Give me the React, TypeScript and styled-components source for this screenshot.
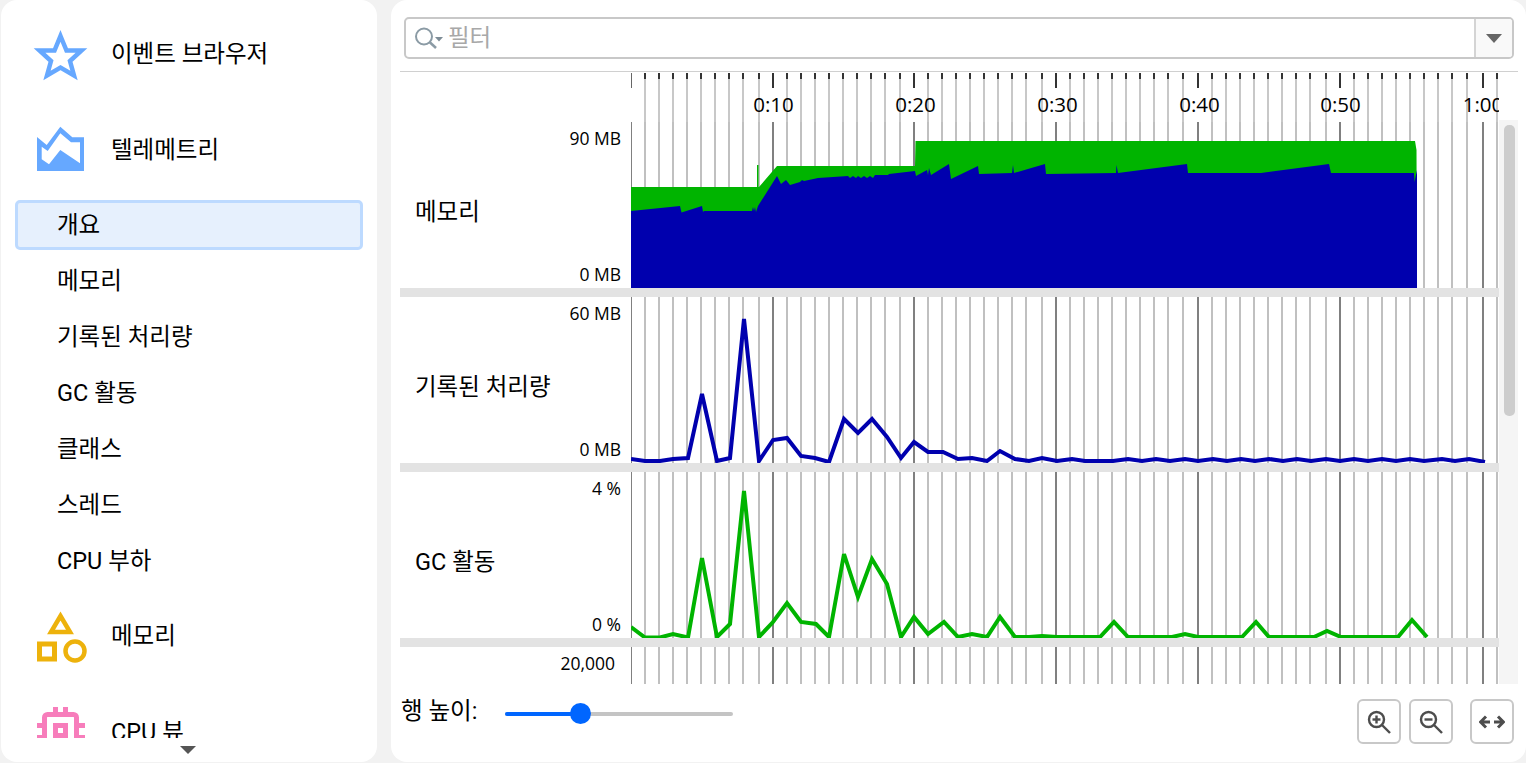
import styled, { createGlobalStyle } from 'styled-components';

const LABEL_FONT = '"Roboto", "Noto Sans CJK KR", sans-serif';

const GlobalStyle = createGlobalStyle`
    html, body {
        margin: 0;
        padding: 0;
        background: #f2f2f2;
        overflow: hidden;
    }
    body {
        font-family: "Open Sans", "Noto Sans CJK KR", sans-serif;
        color: #000;
    }
`;

const Page = styled.div`
    display: flex;
    gap: 14px;
    width: 1526px;
    height: 763px;
    padding-left: 1px;
    box-sizing: border-box;
`;

const Sidebar = styled.aside`
    width: 376px;
    height: 762px;
    background: #fff;
    border-radius: 16px;
    display: flex;
    flex-direction: column;
`;

const NavList = styled.div`
    height: 738px;
    padding-top: 5px;
    box-sizing: border-box;
    overflow: hidden;
    flex-shrink: 0;
`;

const NavHeader = styled.div`
    height: 96px;
    display: flex;
    align-items: center;
    gap: 24px;
    padding-left: 34px;
    font-family: ${LABEL_FONT};
    font-size: 23.5px;
    svg {
        flex-shrink: 0;
        overflow: visible;
    }
`;

const NavHeaderText = styled.span`
    margin-bottom: 2px;
`;

const NavItems = styled.div`
    display: flex;
    flex-direction: column;
    gap: 6px;
    padding: 3px 14px 1px;
    width: 348px;
`;

const NavItem = styled.div<{ $selected?: boolean }>`
    height: 50px;
    box-sizing: border-box;
    display: flex;
    align-items: center;
    padding: 0 0 4px 39px;
    font-family: ${LABEL_FONT};
    font-size: 23.5px;
    border-radius: 5px;
    border: 3px solid ${props => props.$selected ? '#bddaff' : 'transparent'};
    background: ${props => props.$selected ? '#e6f0fd' : 'transparent'};
`;

const MoreArrow = styled.div`
    width: 0;
    height: 0;
    margin: 8px 0 0 179px;
    border-left: 8px solid transparent;
    border-right: 8px solid transparent;
    border-top: 8px solid #555;
`;

const Main = styled.main`
    flex: 1;
    height: 762px;
    background: #fff;
    border-radius: 16px;
    padding: 0 8px 0 9px;
    box-sizing: border-box;
    display: flex;
    flex-direction: column;
    min-width: 0;
`;

const FilterBar = styled.div`
    display: flex;
    height: 42px;
    margin: 17px 4px 12px 4px;
    border: 2px solid #c8c8c8;
    border-radius: 5px;
    box-sizing: border-box;
    flex-shrink: 0;
`;

const FilterInput = styled.div`
    flex: 1;
    display: flex;
    align-items: center;
    gap: 3px;
    padding: 0 0 4px 7px;
    font-family: ${LABEL_FONT};
    font-size: 23.5px;
    color: #a8a8a8;
    svg {
        margin-top: 4px;
    }
`;

const FilterButton = styled.div`
    width: 36px;
    background: #f9f9f9;
    border-left: 2px solid #d4d4d4;
    border-radius: 0 3px 3px 0;
    display: flex;
    align-items: center;
    justify-content: center;
`;

const DownTriangle = styled.div`
    width: 0;
    height: 0;
    border-left: 8px solid transparent;
    border-right: 8px solid transparent;
    border-top: 9px solid #666;
`;

const Separator = styled.div`
    height: 1px;
    background: #d0d0d0;
    flex-shrink: 0;
`;

const TimelineRow = styled.div`
    height: 50px;
    padding-left: 231px;
    width: 1099px;
    box-sizing: border-box;
    flex-shrink: 0;
    svg {
        display: block;
    }
    text {
        font-family: "Open Sans", sans-serif;
        font-size: 20.5px;
        fill: #000;
        text-anchor: middle;
    }
`;

const ChartBody = styled.div`
    display: flex;
    height: 562px;
    flex-shrink: 0;
`;

const Rows = styled.div`
    width: 1099px;
    overflow: hidden;
`;

const Row = styled.div`
    height: 166px;
    display: flex;
    svg {
        display: block;
        flex-shrink: 0;
    }
`;

const RowHead = styled.div`
    width: 231px;
    display: flex;
    flex-shrink: 0;
`;

const RowTitle = styled.div`
    flex: 1;
    display: flex;
    align-items: center;
    padding: 9px 0 0 15px;
    font-family: ${LABEL_FONT};
    font-size: 23.5px;
`;

const Axis = styled.div<{ $right: number }>`
    display: flex;
    flex-direction: column;
    justify-content: space-between;
    align-items: flex-end;
    padding: 4px ${props => props.$right}px 2px 0;
    font-size: 17.5px;
    line-height: 24px;
`;

const RowDivider = styled.div`
    height: 9px;
    background: #e3e3e3;
`;

const ScrollTrack = styled.div`
    width: 19px;
    height: 564px;
    margin-top: -2px;
    background: #f5f5f5;
    padding: 5px 3px 0 5px;
    box-sizing: border-box;
`;

const ScrollThumb = styled.div`
    height: 291px;
    background: #cdcdcd;
    border-radius: 5px;
`;

const Footer = styled.div`
    flex: 1;
    display: flex;
    align-items: flex-start;
    padding: 15px 4px 0 1px;
`;

const RowHeightLabel = styled.div`
    font-family: ${LABEL_FONT};
    font-size: 23.5px;
    line-height: 24px;
    width: 104px;
`;

const Slider = styled.div`
    position: relative;
    width: 228px;
    height: 4px;
    margin-top: 13px;
    background: #c4c4c4;
    border-radius: 2px;
`;

const SliderFill = styled.div`
    height: 100%;
    background: #0066ff;
    border-radius: 2px;
`;

const SliderThumb = styled.div`
    position: absolute;
    top: -9px;
    width: 21px;
    height: 21px;
    margin-left: -10px;
    border-radius: 50%;
    background: #0066ff;
`;

const FooterButtons = styled.div`
    margin-left: auto;
    display: flex;
    gap: 8px;
`;

const IconButton = styled.div<{ $gapBefore?: boolean }>`
    width: 44px;
    height: 45px;
    box-sizing: border-box;
    border: 2px solid #c8c8c8;
    border-radius: 6px;
    display: flex;
    align-items: center;
    justify-content: center;
    margin-left: ${props => props.$gapBefore ? '9px' : '0'};
`;

const CHART_LEFT = 631;
const CHART_WIDTH = 868;

// left pixel of each 10 second line, and the offset of the last minor line before the next one
const MAJORS = [630, 772, 913, 1055, 1197, 1339, 1482];
const LAST_MINOR = [128, 127, 128, 127, 128, 127, 999];

const minorTicks: number[] = [];
MAJORS.forEach((m, i) => {
    for (let k = 1; k <= 8; k++) minorTicks.push(m + 14 * k);
    minorTicks.push(m + LAST_MINOR[i]);
});
const minors = minorTicks.filter(x => x < CHART_LEFT + CHART_WIDTH);

const TIME_LABELS = [
    { x: 773.5, label: '0:10' },
    { x: 915.5, label: '0:20' },
    { x: 1057.5, label: '0:30' },
    { x: 1199.5, label: '0:40' },
    { x: 1340.5, label: '0:50' },
    { x: 1483, label: '1:00' },
];

const MEMORY_GREEN = '631,187 757,187 757,165 758.5,165 758.5,187 759,187 777,166 915,166 915.5,141 1415,141 1416.5,150 1417,288 631,288';
const MEMORY_BLUE = '631,211 680,206 681.5,212.5 702,206 703,212 704,211 752,211 753,207 754,211 755,207 756,212 758,206 777,176 781,184 786,180 790,185 800,182 802,180 804,181 818,178 848,176 850,178 853,176 856,178 858,176 861,178 864,176 867,178 870,176 873,178 875,175 888,175 889,174 915,171 916,176 927,170 928,175 929,168 931,175 949,164 951,179 978,166 979,174 1012,173 1013,165 1014,173 1045,164 1046,174 1116,173 1116.5,165 1118,173 1187,164 1188,173 1261,173 1329,164 1331,173 1414,173 1414.5,182 1417,170 1417,288 631,288';

const THROUGHPUT = [
    [631, 459], [645, 461], [660, 461], [673, 459], [688, 458], [702, 394], [717, 461], [730, 458], [744, 319],
    [759, 461], [773, 440], [787, 438], [801, 456], [815, 458], [829, 462], [844, 419], [858, 433], [872, 419],
    [887, 437], [901, 458], [914, 442], [928, 452], [943, 452], [958, 459], [972, 458], [987, 461], [1000, 451],
    [1015, 459], [1029, 461], [1042, 458], [1057, 461], [1072, 459], [1085, 461], [1113, 461], [1128, 459],
    [1142, 461], [1156, 459], [1170, 461], [1185, 459], [1198, 461], [1213, 459], [1227, 461], [1241, 459],
    [1255, 461], [1269, 459], [1283, 461], [1297, 459], [1311, 461], [1326, 459], [1340, 461], [1354, 459],
    [1368, 461], [1382, 459], [1396, 461], [1410, 459], [1424, 461], [1442, 459], [1455, 461], [1469, 459], [1485, 462],
];

const GC_ACTIVITY = [
    [631, 627], [645, 637.5], [660, 637.5], [673, 634], [688, 637.5], [702, 558], [717, 637], [730, 624], [744, 491],
    [759, 637], [773, 622], [787, 603], [801, 622], [816, 624], [829, 637], [844, 554], [858, 597], [872, 559],
    [887, 584], [901, 637], [914, 617], [928, 634], [944, 622], [958, 637], [972, 634], [987, 637], [1000, 617],
    [1015, 637], [1029, 637], [1042, 636], [1057, 637], [1100, 637], [1114, 622], [1128, 637], [1172, 637],
    [1185, 634], [1198, 637], [1242, 637], [1256, 622], [1269, 637], [1314, 637], [1327, 631], [1341, 637],
    [1398, 637], [1412, 620], [1427, 637],
];

const toPoints = (data: number[][]) => data.map(p => p.join(',')).join(' ');

function GridLines({ top, height }: { top: number; height: number }) {
    return <>
        {minors.map(x => <rect key={x} x={x} y={top} width={2} height={height} fill="#c0c0c0" />)}
        {MAJORS.map((x, i) => <rect key={x} x={i === 0 ? 631 : x} y={top} width={i === 0 ? 1 : 2} height={height} fill="#808080" />)}
    </>;
}

function ChartFrame({ top, children }: { top: number; children?: React.ReactNode }) {
    return <svg width={CHART_WIDTH} height={166} viewBox={`${CHART_LEFT} ${top} ${CHART_WIDTH} 166`}>
        <GridLines top={top} height={166} />
        {children}
    </svg>;
}

function Timeline() {
    return <svg width={CHART_WIDTH} height={50} viewBox={`${CHART_LEFT} 72 ${CHART_WIDTH} 50`}>
        {minors.map(x => <g key={x}>
            <rect x={x} y={78} width={2} height={44} fill="#c8c8c8" />
            <rect x={x} y={73} width={2} height={6} fill="#333" />
        </g>)}
        {MAJORS.map((x, i) => <rect key={x} x={i === 0 ? 631 : x} y={73} width={i === 0 ? 1 : 2} height={15} fill={i === 0 ? '#666' : '#333'} />)}
        {TIME_LABELS.map(t => <text key={t.label} x={t.x} y={111.5}>{t.label}</text>)}
    </svg>;
}

function StarIcon() {
    return <svg width="52" height="52" viewBox="35 27 52 52">
        <polygon points="60.5,36 66.5,50.5 81.5,50.5 70,61 74,75.5 60.5,67.5 47,75.5 51,61 39.5,50.5 54.5,50.5" fill="none" stroke="#66a8ff" strokeWidth="4.5" strokeMiterlimit="10" />
    </svg>;
}

function TelemetryIcon() {
    return <svg width="52" height="52" viewBox="35 123 52 52">
        <path fillRule="evenodd" fill="#66a8ff" d="M37 137 L46.7 145 L60.3 126.7 L72.3 137.3 L84 137.3 L84 171 L37 171 Z M41.7 146.7 L41.7 159.3 L49 164.3 L60.3 150 L80 163.3 L80 142.3 L71 142.3 L60.3 133.3 L47.7 151 Z" />
    </svg>;
}

function MemoryIcon() {
    return <svg width="52" height="52" viewBox="35 609 52 52">
        <polygon points="60.5,616 70,632 51,632" fill="none" stroke="#edb20c" strokeWidth="4.5" />
        <rect x="39.5" y="644" width="15" height="15" fill="none" stroke="#edb20c" strokeWidth="5" />
        <circle cx="75" cy="651" r="9.5" fill="none" stroke="#edb20c" strokeWidth="4.5" />
    </svg>;
}

function CpuIcon() {
    return <svg width="52" height="52" viewBox="35 705 52 52">
        <g fill="#f77dbb">
            <rect x="53" y="707" width="5" height="6" />
            <rect x="63" y="707" width="5" height="6" />
            <rect x="37" y="723" width="6" height="5" />
            <rect x="79" y="723" width="6" height="5" />
            <rect x="37" y="735" width="6" height="5" />
            <rect x="79" y="735" width="6" height="5" />
        </g>
        <rect x="44.5" y="714.5" width="32" height="32" rx="3" fill="none" stroke="#f77dbb" strokeWidth="5" />
        <rect x="55.5" y="725.5" width="10" height="10" fill="none" stroke="#f77dbb" strokeWidth="5" />
    </svg>;
}

function SearchIcon() {
    return <svg width="32" height="24" viewBox="0 0 32 24">
        <circle cx="11" cy="10.5" r="8" fill="none" stroke="#8b9ba5" strokeWidth="2" />
        <line x1="16.5" y1="16" x2="23" y2="22" stroke="#8b9ba5" strokeWidth="2.5" />
        <polygon points="22,11 30,11 26,15.5" fill="#7d8c96" />
    </svg>;
}

function ZoomIcon({ plus }: { plus?: boolean }) {
    return <svg width="26" height="26" viewBox="0 0 26 26">
        <circle cx="10.5" cy="10.5" r="7.5" fill="none" stroke="#4d4d4d" strokeWidth="2.4" />
        <line x1="16" y1="16" x2="24" y2="24" stroke="#4d4d4d" strokeWidth="2.4" />
        <line x1="6.5" y1="10.5" x2="14.5" y2="10.5" stroke="#4d4d4d" strokeWidth="2.4" />
        {plus && <line x1="10.5" y1="6.5" x2="10.5" y2="14.5" stroke="#4d4d4d" strokeWidth="2.4" />}
    </svg>;
}

function FitIcon() {
    return <svg width="26" height="16" viewBox="0 0 26 16">
        <path d="M7 2.5 L1.5 8 L7 13.5 M1.5 8 H11 M19 2.5 L24.5 8 L19 13.5 M24.5 8 H15" fill="none" stroke="#4d4d4d" strokeWidth="3" />
    </svg>;
}

const NAV_CHILDREN = ['메모리', '기록된 처리량', 'GC 활동', '클래스', '스레드', 'CPU 부하'];

function App() {
    return <Page>
        <GlobalStyle />
        <Sidebar>
            <NavList>
                <NavHeader><StarIcon /><NavHeaderText>이벤트 브라우저</NavHeaderText></NavHeader>
                <NavHeader><TelemetryIcon /><NavHeaderText>텔레메트리</NavHeaderText></NavHeader>
                <NavItems>
                    <NavItem $selected>개요</NavItem>
                    {NAV_CHILDREN.map(name => <NavItem key={name}>{name}</NavItem>)}
                </NavItems>
                <NavHeader><MemoryIcon /><NavHeaderText>메모리</NavHeaderText></NavHeader>
                <NavHeader><CpuIcon /><NavHeaderText>CPU 뷰</NavHeaderText></NavHeader>
            </NavList>
            <MoreArrow />
        </Sidebar>
        <Main>
            <FilterBar>
                <FilterInput><SearchIcon />필터</FilterInput>
                <FilterButton><DownTriangle /></FilterButton>
            </FilterBar>
            <Separator />
            <TimelineRow><Timeline /></TimelineRow>
            <ChartBody>
                <Rows>
                    <Row>
                        <RowHead>
                            <RowTitle>메모리</RowTitle>
                            <Axis $right={10}><span>90 MB</span><span>0 MB</span></Axis>
                        </RowHead>
                        <ChartFrame top={122}>
                            <polygon points={MEMORY_GREEN} fill="#00b400" />
                            <polygon points={MEMORY_BLUE} fill="#0000ae" />
                        </ChartFrame>
                    </Row>
                    <RowDivider />
                    <Row>
                        <RowHead>
                            <RowTitle>기록된 처리량</RowTitle>
                            <Axis $right={10}><span>60 MB</span><span>0 MB</span></Axis>
                        </RowHead>
                        <ChartFrame top={297}>
                            <polyline points={toPoints(THROUGHPUT)} fill="none" stroke="#0000ae" strokeWidth="4" />
                        </ChartFrame>
                    </Row>
                    <RowDivider />
                    <Row>
                        <RowHead>
                            <RowTitle>GC 활동</RowTitle>
                            <Axis $right={10}><span>4 %</span><span>0 %</span></Axis>
                        </RowHead>
                        <ChartFrame top={472}>
                            <polyline points={toPoints(GC_ACTIVITY)} fill="none" stroke="#00b400" strokeWidth="4" />
                        </ChartFrame>
                    </Row>
                    <RowDivider />
                    <Row>
                        <RowHead>
                            <RowTitle />
                            <Axis $right={16}><span>20,000</span></Axis>
                        </RowHead>
                        <ChartFrame top={647} />
                    </Row>
                </Rows>
                <ScrollTrack><ScrollThumb /></ScrollTrack>
            </ChartBody>
            <Footer>
                <RowHeightLabel>행 높이:</RowHeightLabel>
                <Slider>
                    <SliderFill style={{ width: '33%' }} />
                    <SliderThumb style={{ left: '33%' }} />
                </Slider>
                <FooterButtons>
                    <IconButton><ZoomIcon plus /></IconButton>
                    <IconButton><ZoomIcon /></IconButton>
                    <IconButton $gapBefore><FitIcon /></IconButton>
                </FooterButtons>
            </Footer>
        </Main>
    </Page>;
}

export default App;
